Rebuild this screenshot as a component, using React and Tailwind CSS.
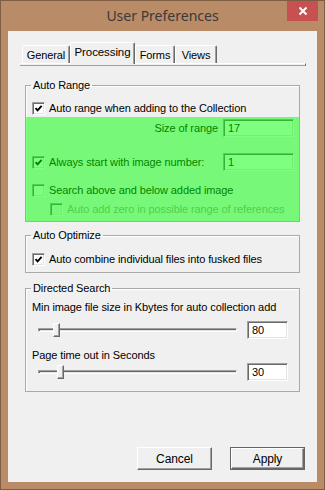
import React from "react";

const sunken =
  "border border-t-[#a0a0a0] border-l-[#a0a0a0] border-b-white border-r-white shadow-[inset_1px_1px_0_#696969,inset_-1px_-1px_0_#e3e3e3]";
const raised =
  "border border-t-white border-l-white border-b-[#696969] border-r-[#696969] shadow-[inset_-1px_-1px_0_#a0a0a0]";

function CheckBox({ checked = false, disabled = false }) {
  return (
    <span
      className={`w-[13px] h-[13px] shrink-0 flex items-center justify-center ${sunken} ${
        disabled ? "bg-[#f0f0f0]" : "bg-white"
      }`}
    >
      {checked && (
        <svg width="9" height="9" viewBox="0 0 9 9">
          <path d="M1.5 4.2 L3.6 6.4 L7.6 1.8" fill="none" stroke="#000" strokeWidth="1.9" />
        </svg>
      )}
    </span>
  );
}

function CheckRow({ label, checked, disabled, className = "" }) {
  return (
    <div className={`flex items-center h-[16px] gap-[4px] ${className}`}>
      <CheckBox checked={checked} disabled={disabled} />
      <span className={disabled ? "text-[#a0a0a0]" : "text-black"}>{label}</span>
    </div>
  );
}

function TextBox({ value, className = "" }) {
  return (
    <div className={`h-[18px] bg-white flex items-center pl-[4px] ${sunken} ${className}`}>{value}</div>
  );
}

function Slider({ offset }) {
  return (
    <div className="relative w-[199px] h-[16px] flex items-center">
      <div className={`w-full h-[4px] bg-[#e3e3e3] ${sunken}`}></div>
      <div className={`absolute top-[1px] w-[7px] h-[14px] bg-[#f0f0f0] ${raised}`} style={{ left: offset }}></div>
    </div>
  );
}

function Group({ title, className = "", children }) {
  return (
    <fieldset className={`border border-[#a9a9a9] shadow-[inset_1px_1px_0_#fff] ${className}`}>
      <legend className="ml-[5px] px-[2px] leading-[13px]">{title}</legend>
      {children}
    </fieldset>
  );
}

const tabs = [
  { name: "General", w: "w-[48px]" },
  { name: "Processing", w: "w-[65px]", active: true },
  { name: "Forms", w: "w-[40px]" },
  { name: "Views", w: "w-[42px]" },
];

export default function App() {
  return (
    <div className="w-[325px] h-[490px] bg-[#b98b67] border border-[#7d5e45] flex flex-col font-['Liberation_Sans',Arial,sans-serif] text-[11px] tracking-[-0.1px] text-black">
      {/* Title bar */}
      <div className="h-[30px] grid grid-cols-[1fr_auto_1fr] items-start">
        <div></div>
        <div className="pt-[5px] text-[14px] leading-[20px] tracking-normal text-[#3a3a3a] font-['Noto_Sans',sans-serif]">
          User Preferences
        </div>
        <div className="flex justify-end pr-[6px]">
          <div className="w-[31px] h-[20px] bg-[#c75050] flex items-center justify-center">
            <svg width="10" height="10" viewBox="0 0 10 10">
              <path d="M1.5 1.5 L8.5 8.5 M8.5 1.5 L1.5 8.5" stroke="#fff" strokeWidth="2" />
            </svg>
          </div>
        </div>
      </div>

      {/* Client area */}
      <div className="mx-[7px] h-[451px] bg-[#f0f0f0] flex flex-col">
        {/* Tabs */}
        <div className="ml-[12px] w-[286px] mt-[11px]">
          <div className="flex items-end h-[21px] pl-[2px]">
            {tabs.map((t) =>
              t.active ? (
                <div
                  key={t.name}
                  className={`${t.w} h-[22px] -mb-[1px] z-10 relative bg-[#f0f0f0] border-t border-l border-white border-r border-r-[#696969] shadow-[inset_-1px_0_0_#a0a0a0] rounded-t-[2px] pt-[3px] text-center leading-[13px] text-[11.5px]`}
                >
                  {t.name}
                </div>
              ) : (
                <div
                  key={t.name}
                  className={`${t.w} h-[18px] border-t border-l border-white border-r border-r-[#696969] shadow-[inset_-1px_0_0_#a0a0a0] rounded-t-[2px] pt-[3px] text-center leading-[13px]`}
                >
                  {t.name}
                </div>
              )
            )}
          </div>
          <div className="h-[3px] border-t border-white border-r border-r-[#696969] border-b border-b-[#a0a0a0]"></div>
        </div>

        <div className="px-[17px] flex flex-col">
          {/* Auto Range */}
          <Group title="Auto Range" className="mt-[13px]">
            <CheckRow label="Auto range when adding to the Collection" checked className="mt-[8px] pl-[6px]" />
            <div className="relative mt-[1px] pt-[2px] pb-[4px] flex flex-col">
              <div className="flex items-center justify-end h-[18px] pr-[5px] gap-[5px]">
                <span>Size of range</span>
                <TextBox value="17" className="w-[71px]" />
              </div>
              <div className="flex items-center justify-between h-[18px] mt-[16px] pl-[6px] pr-[5px]">
                <div className="flex items-center gap-[4px]">
                  <CheckBox checked />
                  <span>Always start with image number:</span>
                </div>
                <TextBox value="1" className="w-[71px]" />
              </div>
              <CheckRow label="Search above and below added image" className="mt-[11px] pl-[6px]" />
              <CheckRow
                label="Auto add zero in possible range of references"
                disabled
                className="mt-[3px] pl-[24px]"
              />
              {/* highlight overlay */}
              <div className="absolute inset-0 bg-[#00ff00]/50 pointer-events-none"></div>
            </div>
          </Group>

          {/* Auto Optimize */}
          <Group title="Auto Optimize" className="mt-[7px] pb-[5px]">
            <CheckRow label="Auto combine individual files into fusked files" checked className="mt-[9px] pl-[6px]" />
          </Group>

          {/* Directed Search */}
          <Group title="Directed Search" className="mt-[9px] pb-[10px]">
            <div className="mt-[5px] h-[14px] leading-[14px] pl-[6px]">
              Min image file size in Kbytes for auto collection add
            </div>
            <div className="mt-[7px] flex items-center pl-[12px] gap-[10px]">
              <Slider offset={15} />
              <TextBox value="80" className="w-[41px] h-[16px]" />
            </div>
            <div className="mt-[9px] h-[14px] leading-[14px] pl-[6px]">Page time out in Seconds</div>
            <div className="mt-[1px] flex items-center pl-[12px] gap-[10px]">
              <Slider offset={19} />
              <TextBox value="30" className="w-[41px] h-[16px]" />
            </div>
          </Group>
        </div>

        {/* Buttons */}
        <div className="mt-auto mb-[12px] flex justify-end gap-[18px] pr-[12px]">
          <button className={`w-[75px] h-[23px] bg-[#f0f0f0] ${raised} text-[12px]`}>Cancel</button>
          <button className="w-[75px] h-[23px] border border-[#646464]">
            <div className={`w-full h-full bg-[#f0f0f0] ${raised} flex items-center justify-center text-[12px]`}>
              Apply
            </div>
          </button>
        </div>
      </div>
    </div>
  );
}
